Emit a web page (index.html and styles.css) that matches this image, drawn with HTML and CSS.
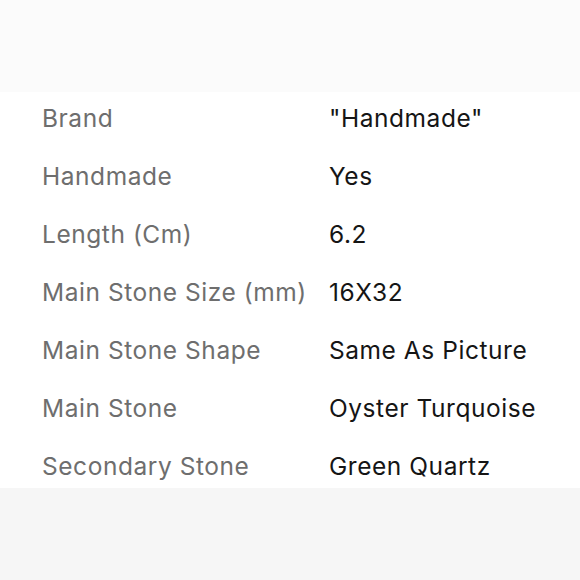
FILE: index.html
```html
<!DOCTYPE html>
<html lang="en">
<head>
<meta charset="utf-8">
<link rel="stylesheet" href="styles.css">
</head>
<body>
<div class="top"></div>
<dl class="specs">
  <dt>Brand</dt><dd>"Handmade"</dd>
  <dt>Handmade</dt><dd>Yes</dd>
  <dt>Length (Cm)</dt><dd>6.2</dd>
  <dt>Main Stone Size (mm)</dt><dd>16X32</dd>
  <dt>Main Stone Shape</dt><dd>Same As Picture</dd>
  <dt>Main Stone</dt><dd>Oyster Turquoise</dd>
  <dt>Secondary Stone</dt><dd>Green Quartz</dd>
</dl>
<div class="bottom"></div>
</body>
</html>
```
FILE: styles.css
```css
html, body {
  margin: 0;
  padding: 0;
  width: 580px;
  height: 580px;
  overflow: hidden;
  background: #f6f6f6;
  font-family: Inter, "Noto Sans", sans-serif;
}
.top {
  height: 92px;
  background: #fbfbfb;
}
.specs {
  margin: 0;
  background: #ffffff;
  height: 396px;
  box-sizing: border-box;
  padding: 13.8px 0 0 42px;
  display: grid;
  grid-template-columns: 287px 1fr;
  grid-auto-rows: 24px;
  row-gap: 34px;
  font-size: 24.5px;
  letter-spacing: 0.55px;
  line-height: 24px;
}
.specs dt {
  color: #6e6e6e;
  margin: 0;
  white-space: nowrap;
}
.specs dd {
  color: #151515;
  margin: 0;
  white-space: nowrap;
}
.bottom {
  height: 92px;
  background: #f6f6f6;
}
```
